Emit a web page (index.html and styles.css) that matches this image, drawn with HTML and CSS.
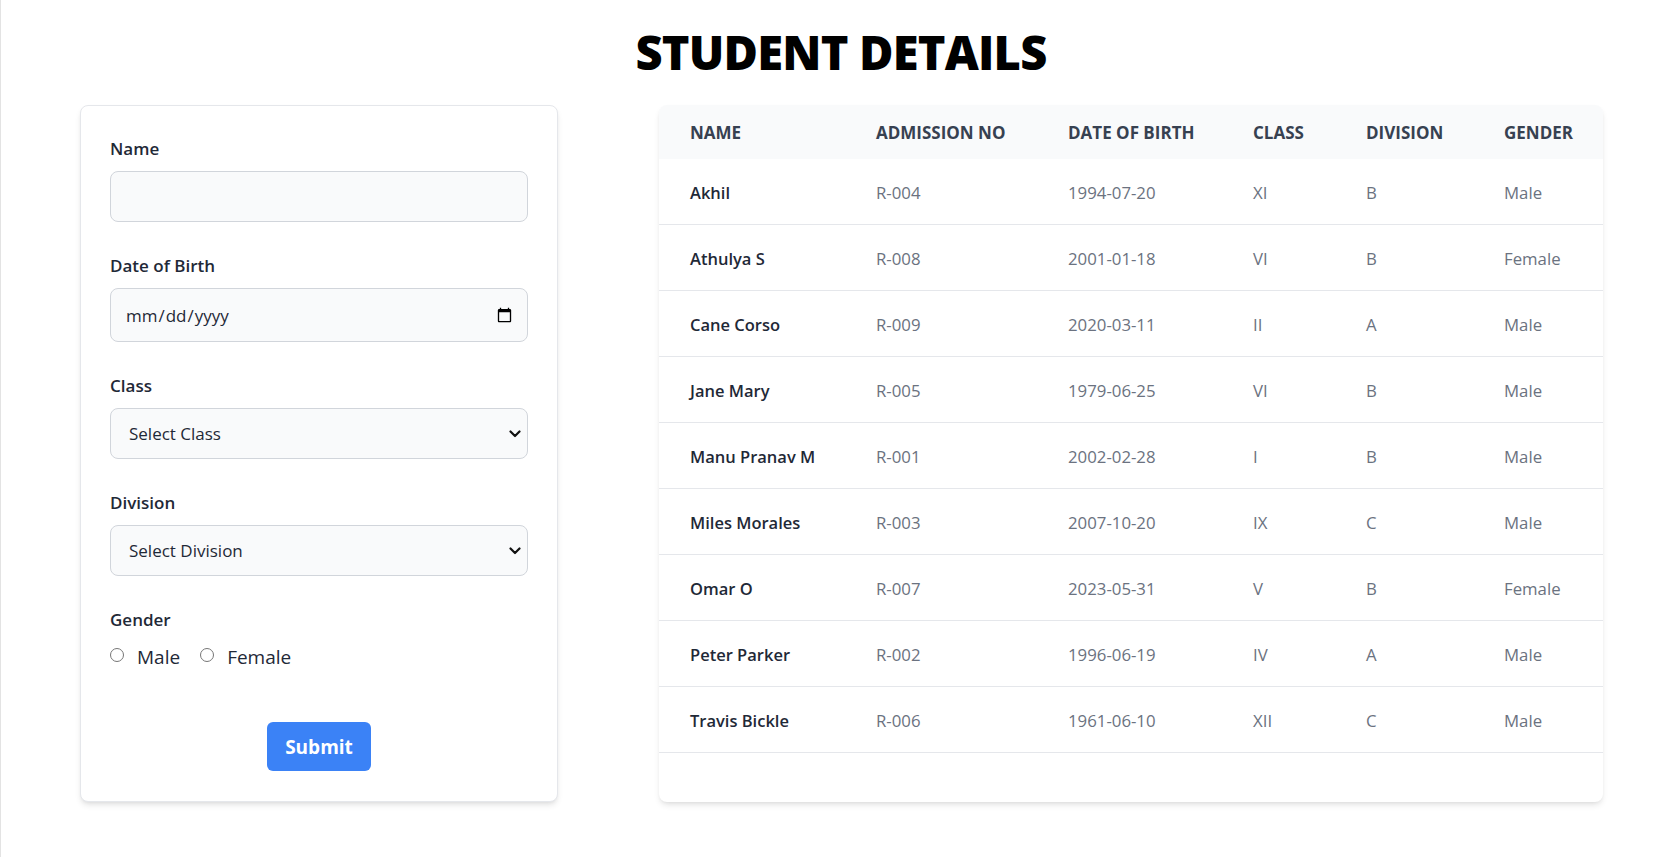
FILE: index.html
```html
<!DOCTYPE html>
<html lang="en">
<head>
<meta charset="utf-8">
<title>Student Details</title>
<link rel="stylesheet" href="styles.css">
</head>
<body>
<div class="page">
  <h1 class="title">STUDENT DETAILS</h1>
  <main class="layout">
    <form class="form-card">
      <div class="field">
        <label class="label" for="name">Name</label>
        <input class="control" id="name" type="text">
      </div>
      <div class="field">
        <label class="label" for="dob">Date of Birth</label>
        <input class="control control-date" id="dob" type="date">
      </div>
      <div class="field">
        <label class="label" for="cls">Class</label>
        <div class="select-wrap">
          <select class="control control-select" id="cls">
            <option>Select Class</option>
          </select>
          <svg class="chevron" viewBox="0 0 12 8" width="12" height="8"><path d="M1.5 1.5 L6 6 L10.5 1.5" fill="none" stroke="#111" stroke-width="2.2" stroke-linecap="round" stroke-linejoin="round"/></svg>
        </div>
      </div>
      <div class="field">
        <label class="label" for="div">Division</label>
        <div class="select-wrap">
          <select class="control control-select" id="div">
            <option>Select Division</option>
          </select>
          <svg class="chevron" viewBox="0 0 12 8" width="12" height="8"><path d="M1.5 1.5 L6 6 L10.5 1.5" fill="none" stroke="#111" stroke-width="2.2" stroke-linecap="round" stroke-linejoin="round"/></svg>
        </div>
      </div>
      <div class="field field-gender">
        <span class="label">Gender</span>
        <div class="radios">
          <label class="radio"><input type="radio" name="gender" value="Male"><span>Male</span></label>
          <label class="radio"><input type="radio" name="gender" value="Female"><span>Female</span></label>
        </div>
      </div>
      <div class="actions">
        <button class="submit" type="button">Submit</button>
      </div>
    </form>

    <section class="table-card">
      <table class="students">
        <colgroup>
          <col class="c-name"><col class="c-adm"><col class="c-dob"><col class="c-class"><col class="c-div"><col class="c-gender">
        </colgroup>
        <thead>
          <tr><th>NAME</th><th>ADMISSION NO</th><th>DATE OF BIRTH</th><th>CLASS</th><th>DIVISION</th><th>GENDER</th></tr>
        </thead>
        <tbody>
          <tr><td class="nm">Akhil</td><td>R-004</td><td>1994-07-20</td><td>XI</td><td>B</td><td>Male</td></tr>
          <tr><td class="nm">Athulya S</td><td>R-008</td><td>2001-01-18</td><td>VI</td><td>B</td><td>Female</td></tr>
          <tr><td class="nm">Cane Corso</td><td>R-009</td><td>2020-03-11</td><td>II</td><td>A</td><td>Male</td></tr>
          <tr><td class="nm">Jane Mary</td><td>R-005</td><td>1979-06-25</td><td>VI</td><td>B</td><td>Male</td></tr>
          <tr><td class="nm">Manu Pranav M</td><td>R-001</td><td>2002-02-28</td><td>I</td><td>B</td><td>Male</td></tr>
          <tr><td class="nm">Miles Morales</td><td>R-003</td><td>2007-10-20</td><td>IX</td><td>C</td><td>Male</td></tr>
          <tr><td class="nm">Omar O</td><td>R-007</td><td>2023-05-31</td><td>V</td><td>B</td><td>Female</td></tr>
          <tr><td class="nm">Peter Parker</td><td>R-002</td><td>1996-06-19</td><td>IV</td><td>A</td><td>Male</td></tr>
          <tr><td class="nm">Travis Bickle</td><td>R-006</td><td>1961-06-10</td><td>XII</td><td>C</td><td>Male</td></tr>
        </tbody>
      </table>
    </section>
  </main>
</div>
</body>
</html>
```

FILE: styles.css
```css
* { box-sizing: border-box; }

html, body {
  margin: 0;
  padding: 0;
  background: #ffffff;
}

body {
  font-family: "Open Sans", "Noto Sans", Arial, sans-serif;
  color: #1f2937;
}

.page {
  min-height: 857px;
  padding-top: 23px;
  border-left: 1px solid #e3e3e3;
}

.title {
  margin: 0 0 24px;
  padding-left: 4px;
  text-align: center;
  font-size: 47px;
  line-height: 58px;
  font-weight: 800;
  color: #000;
  letter-spacing: -0.8px;
}

.layout {
  display: flex;
  align-items: stretch;
  gap: 101px;
  padding-left: 79px;
}

/* ---------- form ---------- */
.form-card {
  width: 478px;
  flex: none;
  background: #fff;
  border: 1px solid #e5e7eb;
  border-radius: 8px;
  box-shadow: 0 4px 6px -1px rgba(0,0,0,0.10), 0 2px 4px -2px rgba(0,0,0,0.08);
  padding: 29px 29px 30px 29px;
}

.field { margin-bottom: 30px; }

.label {
  display: block;
  font-size: 17px;
  line-height: 28px;
  font-weight: 600;
  color: #1f2937;
  margin-bottom: 8px;
}

.control {
  display: block;
  width: 100%;
  height: 51px;
  margin: 0;
  padding: 0 15px;
  background: #f9fafb;
  border: 1px solid #d1d5db;
  border-radius: 8px;
  font-family: inherit;
  font-size: 17px;
  color: #1f2937;
  outline: none;
}

.control-date {
  height: 54px;
  padding: 0 12px 0 14px;
  color: #1f2937;
}

.control-date::-webkit-calendar-picker-indicator {
  margin-right: 0;
}

.select-wrap { position: relative; }

.control-select {
  appearance: none;
  -webkit-appearance: none;
  padding-left: 18px;
  color: #1f2937;
}

.chevron {
  position: absolute;
  right: 7px;
  top: 22px;
  width: 12px;
  height: 8px;
  pointer-events: none;
}

.field-gender { margin-bottom: 51px; }
.field-gender .label { margin-bottom: 9px; }

.radios {
  display: flex;
  align-items: center;
  gap: 20px;
  height: 28px;
}

.radio {
  display: flex;
  align-items: center;
  gap: 13px;
  font-size: 19px;
  line-height: 28px;
  color: #1f2937;
}

.radio input {
  margin: 0;
  width: 14px;
  height: 14px;
  position: relative;
  top: -2px;
}

.actions {
  display: flex;
  justify-content: center;
}

.submit {
  background: #3b82f6;
  color: #fff;
  border: 0;
  border-radius: 6px;
  font-family: inherit;
  font-size: 19px;
  font-weight: 700;
  line-height: 28px;
  padding: 11px 18px 10px;
  cursor: pointer;
}

/* ---------- table ---------- */
.table-card {
  width: 944px;
  flex: none;
  background: #fff;
  border-radius: 8px;
  overflow: hidden;
  box-shadow: 0 4px 6px -1px rgba(0,0,0,0.10), 0 2px 4px -2px rgba(0,0,0,0.08);
}

.students {
  width: 944px;
  table-layout: fixed;
  border-collapse: collapse;
}

.c-name { width: 186px; }
.c-adm { width: 192px; }
.c-dob { width: 185px; }
.c-class { width: 113px; }
.c-div { width: 138px; }
.c-gender { width: 130px; }

.students thead tr { background: #f9fafb; }

.students th {
  text-align: left;
  padding: 14px 0 12px 31px;
  font-size: 17px;
  line-height: 28px;
  font-weight: 700;
  color: #374151;
  white-space: nowrap;
}

.students td {
  padding: 20px 0 17px 31px;
  font-size: 16.8px;
  line-height: 28px;
  color: #6b7280;
  border-bottom: 1px solid #e5e7eb;
  white-space: nowrap;
}

.students td.nm {
  color: #1f2937;
  font-weight: 600;
  font-size: 16.5px;
}
```
